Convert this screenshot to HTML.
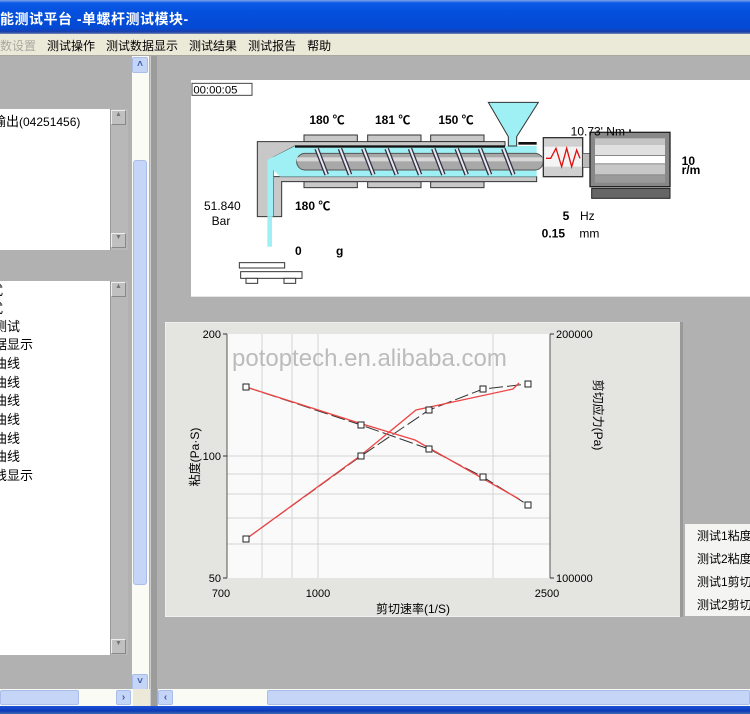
<!DOCTYPE html>
<html><head><meta charset="utf-8"><style>
*{margin:0;padding:0;box-sizing:border-box}
body{width:750px;height:714px;overflow:hidden;background:#b1b1b1;position:relative;font-family:"Liberation Sans","Noto Sans CJK SC",sans-serif;font-size:12px;color:#000}
.a{position:absolute}
.title{left:0;top:0;width:750px;height:34px;background:linear-gradient(#7fa2e8 0,#0a5ae8 3px,#0450dd 12px,#0349d3 28px,#1d3fa8 32px,#7b8fb8 34px);color:#fff;font-weight:bold;font-size:14px;padding:9px 0 0 0;letter-spacing:0.5px}
.menu{left:0;top:34px;width:750px;height:22px;background:#ebe9d8;border-bottom:1px solid #a8a8a0;font-size:12px;padding-top:3px}
.menu span{margin-right:11px}
.lb{background:#fff}
.sb{background:#b8b8b8;border-left:1px solid #999}
.btn{background:#c0c0c0;border:1px solid #888;border-top-color:#eee;border-left-color:#eee;font-size:7px;text-align:center;color:#777}
.xpb{background:#c4d5f8;border:1px solid #a9bde8;color:#3b5ca8;font-size:10px;font-weight:bold;text-align:center;line-height:13px;border-radius:2px}
.li{position:absolute;left:-6px;font-size:13px;line-height:18px}
</style></head><body>
<div class="a title">能测试平台 -单螺杆测试模块-</div>
<div class="a menu"><span style="color:#a8a8a0">数设置</span><span>测试操作</span><span>测试数据显示</span><span>测试结果</span><span>测试报告</span><span>帮助</span></div>

<div class="a lb" style="left:0;top:109px;width:110px;height:141px;overflow:hidden"><div style="position:absolute;left:-7px;top:2px;font-size:13px">输出<span style="font-size:12px">(04251456)</span></div></div>
<div class="a sb" style="left:110px;top:109px;width:18px;height:141px"></div>
<div class="a btn" style="left:111px;top:110px;width:15px;height:15px">▲</div>
<div class="a btn" style="left:111px;top:233px;width:15px;height:15px">▼</div>

<div class="a lb" style="left:0;top:281px;width:110px;height:374px;overflow:hidden">
<div class="li" style="top:1px;left:-10px">式</div>
<div class="li" style="top:19px;left:-10px">式</div>
<div class="li" style="top:37px">测试</div>
<div class="li" style="top:55px">据显示</div>
<div class="li" style="top:74px">曲线</div>
<div class="li" style="top:93px">曲线</div>
<div class="li" style="top:111px">曲线</div>
<div class="li" style="top:130px">曲线</div>
<div class="li" style="top:149px">曲线</div>
<div class="li" style="top:167px">曲线</div>
<div class="li" style="top:186px">线显示</div>
</div>
<div class="a sb" style="left:110px;top:281px;width:18px;height:374px"></div>
<div class="a btn" style="left:111px;top:282px;width:15px;height:15px">▲</div>
<div class="a btn" style="left:111px;top:639px;width:15px;height:15px">▼</div>

<div class="a" style="left:132px;top:56px;width:17px;height:634px;background:#fbfbf6"></div>
<div class="a xpb" style="left:132px;top:57px;width:16px;height:16px">˄</div>
<div class="a xpb" style="left:133px;top:160px;width:14px;height:425px;border-radius:3px"></div>
<div class="a xpb" style="left:132px;top:674px;width:16px;height:16px">˅</div>
<div class="a" style="left:150px;top:56px;width:7px;height:650px;background:#9c9c9c;border-left:1px solid #ccc"></div>

<div class="a" style="left:0;top:689px;width:133px;height:17px;background:#fbfbf6"></div>
<div class="a xpb" style="left:0;top:690px;width:79px;height:15px"></div>
<div class="a xpb" style="left:116px;top:690px;width:15px;height:15px">›</div>
<div class="a" style="left:133px;top:689px;width:17px;height:17px;background:#ece9d8"></div>
<div class="a" style="left:158px;top:689px;width:592px;height:17px;background:#fbfbf6"></div>
<div class="a xpb" style="left:158px;top:690px;width:15px;height:15px">‹</div>
<div class="a xpb" style="left:267px;top:690px;width:483px;height:15px"></div>
<div class="a" style="left:0;top:706px;width:750px;height:8px;background:linear-gradient(#1d50d8,#0b3ab8 5px,#3e6fae)"></div>

<svg class="a" style="left:180px;top:70px" width="570" height="230" viewBox="0 0 1710 690" font-family="Liberation Sans,Noto Sans CJK SC,sans-serif" font-size="36" font-weight="bold">
<rect x="33" y="30" width="1680" height="650" fill="#fff"/>
<rect x="36" y="40" width="180" height="36" fill="#fff" stroke="#444" stroke-width="3"/>
<text x="40" y="70" font-weight="normal" font-size="34">00:00:05</text>
<g fill="#c8c8c8" stroke="#333" stroke-width="3">
<rect x="372" y="195" width="160" height="20"/><rect x="563" y="195" width="160" height="20"/><rect x="752" y="195" width="160" height="20"/>
<rect x="372" y="335" width="160" height="18"/><rect x="563" y="335" width="160" height="18"/><rect x="752" y="335" width="160" height="18"/>
</g>
<path d="M232 215 H975 V228 H345 L280 262 V440 H232 Z" fill="#c8c8c8" stroke="#333" stroke-width="3"/>
<path d="M280 320 H1070 V335 H305 V440 H280 Z" fill="#c8c8c8" stroke="#333" stroke-width="3"/>
<path d="M345 228 H1070 V320 H300 L280 300 V440 H262 V270 Z" fill="#9ef0f4"/>
<rect x="345" y="226" width="630" height="7" fill="#111"/>
<rect x="1015" y="216" width="55" height="8" fill="#111"/>
<rect x="262" y="440" width="14" height="90" fill="#9ef0f4"/>
<rect x="350" y="250" width="740" height="50" rx="25" fill="#a8a8a8" stroke="#555" stroke-width="3"/>
<rect x="350" y="262" width="740" height="12" fill="#d8d8d8"/>
<g stroke="#334" stroke-width="14" fill="none">
<path d="M410 236 L440 314 M480 236 L510 314 M550 236 L580 314 M620 236 L650 314 M690 236 L720 314 M760 236 L790 314 M830 236 L860 314 M900 236 L930 314 M970 236 L1000 314"/>
</g>
<g stroke="#e8e8f0" stroke-width="6" fill="none">
<path d="M410 236 L440 314 M480 236 L510 314 M550 236 L580 314 M620 236 L650 314 M690 236 L720 314 M760 236 L790 314 M830 236 L860 314 M900 236 L930 314 M970 236 L1000 314"/>
</g>
<path d="M925 97 H1075 L1010 200 V228 H985 V200 Z" fill="#9ef0f4" stroke="#333" stroke-width="3"/>
<rect x="1090" y="203" width="118" height="117" fill="#d0d0d0" stroke="#333" stroke-width="4"/>
<rect x="1093" y="230" width="112" height="60" fill="#f4f4f4"/>
<path d="M1098 265 L1112 265 L1128 235 L1145 290 L1160 235 L1175 290 L1190 240 L1200 265" stroke="#e01010" stroke-width="4" fill="none"/>
<rect x="1208" y="250" width="24" height="42" fill="#bbb" stroke="#444" stroke-width="2"/>
<rect x="1230" y="187" width="240" height="163" fill="#888" stroke="#222" stroke-width="4"/>
<rect x="1245" y="205" width="210" height="20" fill="#c4c4c4"/>
<rect x="1245" y="225" width="210" height="30" fill="#e0e0e0"/>
<rect x="1245" y="258" width="210" height="22" fill="#fff"/>
<rect x="1245" y="283" width="210" height="30" fill="#c8c8c8"/>
<rect x="1245" y="316" width="210" height="22" fill="#9a9a9a"/>
<rect x="1235" y="355" width="235" height="30" fill="#666" stroke="#222" stroke-width="3"/>
<rect x="1347" y="178" width="6" height="10" fill="#333"/>
<rect x="178" y="578" width="136" height="16" fill="#fff" stroke="#333" stroke-width="3"/>
<rect x="182" y="605" width="184" height="20" fill="#fff" stroke="#333" stroke-width="3"/>
<rect x="198" y="625" width="35" height="15" fill="#fff" stroke="#333" stroke-width="3"/>
<rect x="312" y="625" width="35" height="15" fill="#fff" stroke="#333" stroke-width="3"/>
<text x="388" y="162">180 ℃</text><text x="585" y="162">181 ℃</text><text x="775" y="162">150 ℃</text>
<text x="1172" y="196" font-weight="normal">10.73' Nm</text>
<text x="1505" y="285">10</text><text x="1505" y="312">r/m</text>
<text x="72" y="420" font-weight="normal">51.840</text><text x="95" y="465" font-weight="normal">Bar</text>
<text x="345" y="420">180 ℃</text>
<text x="1148" y="450">5</text><text x="1200" y="450" font-weight="normal">Hz</text>
<text x="1085" y="503">0.15</text><text x="1198" y="503" font-weight="normal">mm</text>
<text x="345" y="555">0</text><text x="468" y="555">g</text>
</svg>

<svg class="a" style="left:165px;top:322px" width="518" height="295" viewBox="165 322 518 295" font-family="Liberation Sans,Noto Sans CJK SC,sans-serif" font-size="11">
<rect x="165" y="322" width="518" height="295" fill="#e4e4e0" stroke="#fafafa"/>
<rect x="680" y="322" width="3" height="295" fill="#999"/>
<rect x="227" y="334" width="323" height="244" fill="#fafafa"/>
<g stroke="#d4d4d4"><path d="M227 456H550M227 474H550M227 494H550M227 518H550M227 544H550M262 334V578M292 334V578M318 334V578M493 334V578"/></g>
<path d="M227 334V578M550 334V578" stroke="#555"/>
<path d="M223 334H227M223 456H227M223 578H227M550 334H554M550 578H554" stroke="#333"/>
<text x="232" y="366" font-size="24" fill="#b0b0b0" fill-opacity="0.85">potoptech.en.alibaba.com</text>
<g fill="none" stroke="#333" stroke-dasharray="14 4"><path d="M246 387L361 425L429 449L483 477L528 505M246 539L361 456L429 410L483 389L528 384"/></g>
<g fill="none" stroke="#e44" stroke-width="1.3"><path d="M246 387L359 423L415 440L519 499M246 539L360 456L416 410L513 389L519 383"/></g>
<g fill="#fff" stroke="#222"><rect x="243" y="384" width="6" height="6"/><rect x="358" y="422" width="6" height="6"/><rect x="426" y="446" width="6" height="6"/><rect x="480" y="474" width="6" height="6"/><rect x="525" y="502" width="6" height="6"/><rect x="243" y="536" width="6" height="6"/><rect x="358" y="453" width="6" height="6"/><rect x="426" y="407" width="6" height="6"/><rect x="480" y="386" width="6" height="6"/><rect x="525" y="381" width="6" height="6"/></g>
<g text-anchor="end"><text x="221" y="338">200</text><text x="221" y="460">100</text><text x="221" y="582">50</text></g>
<text x="556" y="338">200000</text><text x="556" y="582">100000</text>
<text x="221" y="597" text-anchor="middle">700</text><text x="318" y="597" text-anchor="middle">1000</text><text x="547" y="597" text-anchor="middle">2500</text>
<text x="413" y="613" text-anchor="middle" font-size="12">剪切速率(1/S)</text>
<text transform="translate(199 457) rotate(-90)" text-anchor="middle" font-size="12">粘度(Pa·S)</text>
<text transform="translate(594 415) rotate(90)" text-anchor="middle" font-size="12">剪切应力(Pa)</text>
</svg>
<div class="a" style="left:685px;top:524px;width:65px;height:92px;background:#f4f4f2;font-size:12px;line-height:23px;padding:1px 0 0 12px;white-space:nowrap;overflow:hidden">测试1粘度<br>测试2粘度<br>测试1剪切<br>测试2剪切</div>
</body></html>
